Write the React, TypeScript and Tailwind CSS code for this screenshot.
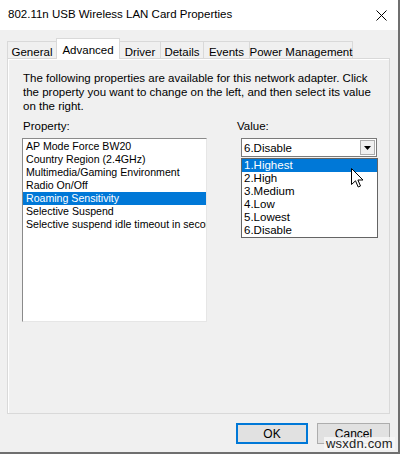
import React from "react";

const font = { fontFamily: '"Liberation Sans", Arial, sans-serif' };

function Cursor() {
  return (
    <svg width="13" height="20" viewBox="0 0 13 20" className="absolute left-[351px] top-[168px]">
      <path
        d="M0.5 0.5 L0.5 16.5 L4.5 12.8 L7.2 19 L9.5 18 L6.9 12 L12 12 Z"
        fill="#ffffff"
        stroke="#000000"
        strokeWidth="1"
        strokeLinejoin="miter"
      />
    </svg>
  );
}

export default function App() {
  const tabs = ["General", "Advanced", "Driver", "Details", "Events", "Power Management"];
  const tabW = [50, 64, 42, 44, 47, 104];
  const props = [
    "AP Mode Force BW20",
    "Country Region (2.4GHz)",
    "Multimedia/Gaming Environment",
    "Radio On/Off",
    "Roaming Sensitivity",
    "Selective Suspend",
    "Selective suspend idle timeout in seconds",
  ];
  const values = ["1.Highest", "2.High", "3.Medium", "4.Low", "5.Lowest", "6.Disable"];

  return (
    <div
      className="relative w-[400px] h-[454px] overflow-hidden bg-[#f0f0f0] border-r-2 border-b-2 border-[#6f6f6f] text-[#000] flex flex-col"
      style={font}
    >
      {/* Title bar */}
      <div className="h-[30px] shrink-0 bg-white flex items-center justify-between pl-[8px] pr-[11px]">
        <span className="text-[11.5px] leading-none text-black whitespace-nowrap">
          802.11n USB Wireless LAN Card Properties
        </span>
        <svg width="11" height="11" viewBox="0 0 11 11">
          <path d="M0.5 0.5 L10.5 10.5 M10.5 0.5 L0.5 10.5" stroke="#000" strokeWidth="1" />
        </svg>
      </div>

      {/* Tabs */}
      <div className="pl-[8px] pt-[7px] flex items-end h-[28px] shrink-0 relative z-10">
        {tabs.map((t, i) => {
          const sel = i === 1;
          return (
            <div
              key={t}
              style={{ width: tabW[i] }}
              className={
                sel
                  ? "h-[21px] -mb-px bg-white border border-b-0 border-[#d9d9d9] flex items-start justify-center pt-[3px] text-[11.5px] whitespace-nowrap -ml-px"
                  : "h-[17px] bg-[#f0f0f0] border border-b-0 border-[#d9d9d9] flex items-start justify-center pt-[2px] text-[11.5px] whitespace-nowrap -ml-px"
              }
            >
              {t}
            </div>
          );
        })}
      </div>

      {/* Panel */}
      <div className="ml-[7px] w-[383px] h-[356px] border border-[#d9d9d9] bg-[#f0f0f0] shrink-0">
        <div className="w-full h-full border-t border-l border-white px-[14px] pt-[11px] text-[11.5px] leading-[14px] flex flex-col">
          <div className="whitespace-nowrap">
            The following properties are available for this network adapter. Click
            <br />
            the property you want to change on the left, and then select its value
            <br />
            on the right.
          </div>
          <div className="flex mt-[6px]">
            <div className="w-[185px] flex flex-col">
              <div className="h-[19px]">Property:</div>
              <div className="-ml-[1px] w-[185px] h-[184px] border-t border-l border-[#8a8a8a] border-r border-b border-r-[#e6e6e6] border-b-[#e6e6e6] bg-white overflow-hidden text-[10.6px] leading-[13px] pt-px">
                {props.map((p, i) => (
                  <div
                    key={p}
                    className={
                      i === 4
                        ? "h-[13px] pl-[3px] whitespace-nowrap bg-[#0078d7] text-white"
                        : "h-[13px] pl-[3px] whitespace-nowrap"
                    }
                  >
                    {p}
                  </div>
                ))}
              </div>
            </div>
            <div className="ml-[30px] flex flex-col">
              <div className="h-[19px]">Value:</div>
              <div className="ml-[4px] w-[136px] h-[19px] border border-[#7a7a7a] bg-white flex items-center justify-between pl-[2px] pr-[1px] text-[11.5px]">
                <span>6.Disable</span>
                <div className="w-[15px] h-[15px] bg-[#f0f0f0] border border-[#adadad] flex items-center justify-center">
                  <svg width="7" height="4" viewBox="0 0 7 4">
                    <path d="M0 0 L7 0 L3.5 4 Z" fill="#000" />
                  </svg>
                </div>
              </div>
              <div className="ml-[4px] mt-[1px] w-[137px] h-[80px] border border-[#646464] bg-white text-[11.5px] leading-[13px]">
                {values.map((v, i) => (
                  <div
                    key={v}
                    className={
                      i === 0
                        ? "h-[13px] pl-[2px] bg-[#0078d7] text-white"
                        : "h-[13px] pl-[2px]"
                    }
                  >
                    {v}
                  </div>
                ))}
              </div>
            </div>
          </div>
        </div>
      </div>

      {/* Buttons */}
      <div className="flex justify-end gap-[9px] pr-[8px] mt-[9px]">
        <button className="w-[72px] h-[21px] bg-[#e1e1e1] border-2 border-[#0078d7] text-[12px] flex items-center justify-center">
          OK
        </button>
        <button className="w-[73px] h-[21px] bg-[#e1e1e1] border border-[#adadad] text-[12px] flex items-center justify-center">
          Cancel
        </button>
      </div>

      <Cursor />

      <div className="absolute left-[324px] top-[437px] px-[2px] bg-[#f7f7f7]/80 text-[13px] leading-[13px] text-[#222] tracking-[0.2px]">
        wsxdn.com
      </div>
    </div>
  );
}
